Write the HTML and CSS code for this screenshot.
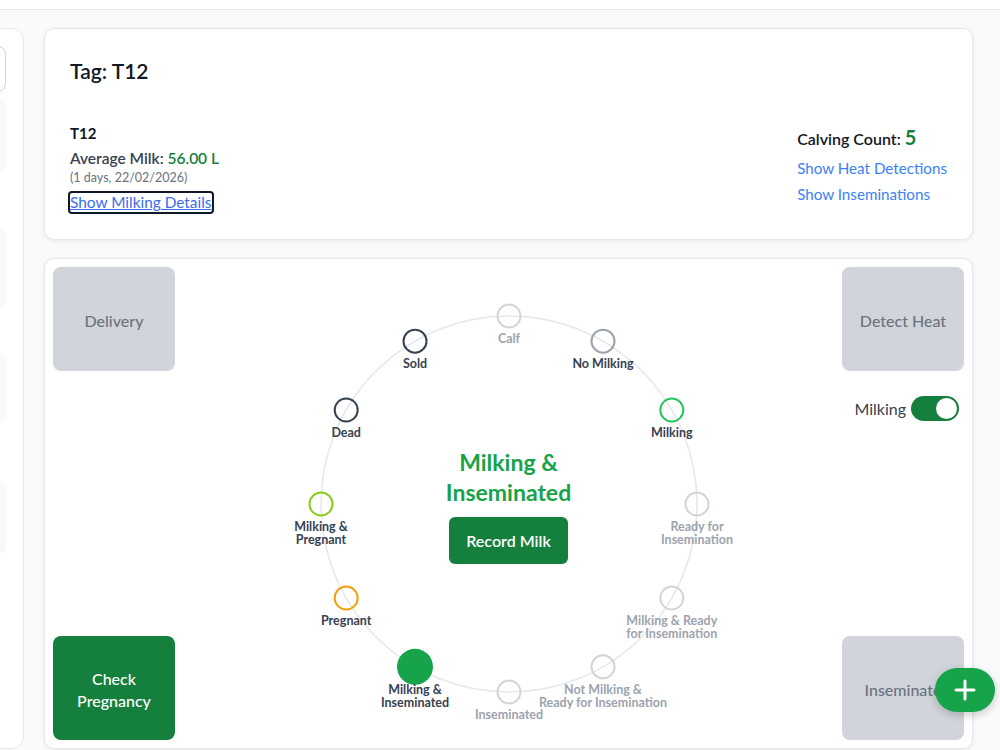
FILE: index.html
```html
<!DOCTYPE html>
<html lang="en">
<head>
<meta charset="utf-8">
<title>Cow T12</title>
<link rel="stylesheet" href="styles.css">
</head>
<body>
<div class="topbar"></div>
<div class="layout">
  <aside class="sidebar">
    <div class="search"></div>
    <div class="side-item item-1"></div>
    <div class="side-item item-2"></div>
    <div class="side-item item-3"></div>
    <div class="side-item item-4"></div>
  </aside>
  <main class="main">
    <section class="card info">
      <h1 class="info-title">Tag: T12</h1>
      <div class="info-body">
        <div class="info-left">
          <div class="tag-name">T12</div>
          <div class="avg">Average Milk: <span class="green">56.00 L</span></div>
          <div class="date">(1 days, 22/02/2026)</div>
          <a class="details-link" href="#">Show Milking Details</a>
        </div>
        <div class="info-right">
          <div class="calving">Calving Count: <span class="count">5</span></div>
          <a class="side-link" href="#">Show Heat Detections</a>
          <a class="side-link" href="#">Show Inseminations</a>
        </div>
      </div>
    </section>
    <section class="card status">
      <div class="col col-left">
        <button class="action gray">Delivery</button>
        <button class="action green-btn bottom">Check<br>Pregnancy</button>
      </div>
      <div class="diagram">
        <svg class="ring" width="440" height="472" viewBox="0 0 440 472">
          <circle cx="220" cy="236" r="188" fill="none" stroke="#e5e7eb" stroke-width="1.5"/>
          <g class="node">
            <circle cx="220" cy="48" r="11.5" fill="none" stroke="#d1d5db" stroke-width="2"/>
            <text class="lbl light" x="220" y="74.5">Calf</text>
          </g>
          <g class="node">
            <circle cx="314" cy="73.2" r="11.5" fill="none" stroke="#9ca3af" stroke-width="2"/>
            <text class="lbl dark" x="314" y="99.7">No Milking</text>
          </g>
          <g class="node">
            <circle cx="382.8" cy="142" r="11.5" fill="none" stroke="#22c55e" stroke-width="2"/>
            <text class="lbl dark" x="382.8" y="168.5">Milking</text>
          </g>
          <g class="node">
            <circle cx="408" cy="236" r="11.5" fill="none" stroke="#d1d5db" stroke-width="2"/>
            <text class="lbl light" x="408" y="263"><tspan x="408">Ready for</tspan><tspan x="408" dy="13">Insemination</tspan></text>
          </g>
          <g class="node">
            <circle cx="382.8" cy="330" r="11.5" fill="none" stroke="#d1d5db" stroke-width="2"/>
            <text class="lbl light" x="382.8" y="357"><tspan x="382.8">Milking &amp; Ready</tspan><tspan x="382.8" dy="13">for Insemination</tspan></text>
          </g>
          <g class="node">
            <circle cx="314" cy="398.8" r="11.5" fill="none" stroke="#d1d5db" stroke-width="2"/>
            <text class="lbl light" x="314" y="425.8"><tspan x="314">Not Milking &amp;</tspan><tspan x="314" dy="13">Ready for Insemination</tspan></text>
          </g>
          <g class="node">
            <circle cx="220" cy="424" r="11.5" fill="none" stroke="#d1d5db" stroke-width="2"/>
            <text class="lbl light" x="220" y="451">Inseminated</text>
          </g>
          <g class="node">
            <circle cx="126" cy="398.8" r="18" fill="#16a34a"/>
            <text class="lbl dark" x="126" y="425.8"><tspan x="126">Milking &amp;</tspan><tspan x="126" dy="13">Inseminated</tspan></text>
          </g>
          <g class="node">
            <circle cx="57.2" cy="330" r="11.5" fill="none" stroke="#f59e0b" stroke-width="2"/>
            <text class="lbl dark" x="57.2" y="357">Pregnant</text>
          </g>
          <g class="node">
            <circle cx="32" cy="236" r="11.5" fill="none" stroke="#84cc16" stroke-width="2"/>
            <text class="lbl dark" x="32" y="263"><tspan x="32">Milking &amp;</tspan><tspan x="32" dy="13">Pregnant</tspan></text>
          </g>
          <g class="node">
            <circle cx="57.2" cy="142" r="11.5" fill="none" stroke="#374151" stroke-width="2"/>
            <text class="lbl dark" x="57.2" y="168.5">Dead</text>
          </g>
          <g class="node">
            <circle cx="126" cy="73.2" r="11.5" fill="none" stroke="#374151" stroke-width="2"/>
            <text class="lbl dark" x="126" y="99.7">Sold</text>
          </g>
        </svg>
        <div class="center">
          <div class="state-title">Milking &amp;<br>Inseminated</div>
          <button class="record">Record Milk</button>
        </div>
      </div>
      <div class="col col-right">
        <button class="action gray">Detect Heat</button>
        <div class="toggle-row">
          <span class="toggle-label">Milking</span>
          <span class="toggle"><span class="knob"></span></span>
        </div>
        <button class="action gray bottom">Inseminate</button>
      </div>
    </section>
  </main>
</div>
<button class="fab" aria-label="Add">
  <svg width="22" height="22" viewBox="0 0 22 22"><path d="M11 2v18M2 11h18" stroke="#fff" stroke-width="3" stroke-linecap="round"/></svg>
</button>
</body>
</html>
```

FILE: styles.css
```css
* { box-sizing: border-box; }
html, body { margin: 0; padding: 0; }
body {
  background: #f9fafb;
  font-family: Lato, "Liberation Sans", sans-serif;
  color: #111827;
  height: 750px;
  overflow: hidden;
}
.topbar {
  height: 10px;
  background: #fff;
  border-bottom: 1px solid #e5e7eb;
}
.layout {
  display: flex;
  gap: 20px;
  padding-top: 18px;
  padding-right: 27px;
}
.sidebar {
  width: 300px;
  margin-left: -276px;
  flex: none;
  height: 721px;
  background: #fff;
  border: 1px solid #e5e7eb;
  border-radius: 12px;
  padding: 17px 17px 0 20px;
}
.search {
  height: 46px;
  border: 1px solid #d1d5db;
  border-radius: 8px;
}
.side-item {
  background: #f8f9fb;
  border-radius: 6px;
}
.item-1 { margin-top: 7px; height: 72px; }
.item-2 { margin-top: 57px; height: 80px; }
.item-3 { margin-top: 45px; height: 70px; }
.item-4 { margin-top: 58px; height: 72px; }

.main {
  flex: 1;
  display: flex;
  flex-direction: column;
  gap: 18px;
}
.card {
  background: #fff;
  border: 1px solid #e5e7eb;
  border-radius: 10px;
  box-shadow: 0 1px 4px rgba(0,0,0,0.08);
}
.info {
  height: 212px;
  padding: 27px 25px 0 25px;
}
.info-title {
  margin: 0;
  font-size: 21px;
  line-height: 30px;
  font-weight: 600;
  color: #111827;
}
.info-body {
  margin-top: 35px;
  display: flex;
  justify-content: space-between;
  align-items: flex-start;
}
.info-left { display: flex; flex-direction: column; align-items: flex-start; }
.tag-name { font-size: 15px; font-weight: 700; line-height: 24px; color: #111827; }
.avg { font-size: 15.5px; font-weight: 600; line-height: 26px; color: #374151; }
.green { color: #15803d; }
.date { font-size: 12.5px; line-height: 14px; color: #6b7280; }
.details-link {
  margin-top: 8px;
  display: inline-block;
  font-size: 15.4px;
  line-height: 19px;
  color: #3b6cf0;
  text-decoration: underline;
  outline: 2px solid #111827;
  border-radius: 2px;
}
.info-right {
  display: flex;
  flex-direction: column;
  align-items: flex-start;
  padding-top: 2px;
  margin-right: 0;
}
.calving { font-size: 16px; font-weight: 600; line-height: 28px; color: #111827; white-space: nowrap; margin-bottom: 2px; }
.count { font-size: 20px; font-weight: 700; color: #15803d; }
.side-link {
  font-size: 15.2px;
  line-height: 26px;
  color: #3b82f6;
  text-decoration: none;
  white-space: nowrap;
}

.status {
  height: 491px;
  padding: 8px;
  display: grid;
  grid-template-columns: 122px 1fr 122px;
}
.col { display: flex; flex-direction: column; }
.action {
  width: 122px;
  height: 104px;
  border: none;
  border-radius: 8px;
  font-family: inherit;
  font-size: 16px;
  font-weight: 500;
  line-height: 22px;
  padding: 3px 0 0 0;
  flex: none;
}
.gray { background: #d1d5db; color: #6b7280; }
.green-btn { background: #15803d; color: #fff; }
.bottom { margin-top: auto; }
.toggle-row {
  margin-top: 25px;
  display: flex;
  justify-content: flex-end;
  align-items: center;
  gap: 5px;
  padding-right: 5px;
}
.toggle-label { font-size: 16px; color: #374151; }
.toggle {
  width: 48px;
  height: 25px;
  border-radius: 13px;
  background: #15803d;
  display: flex;
  justify-content: flex-end;
  align-items: center;
  padding-right: 2px;
}
.knob {
  width: 21px;
  height: 21px;
  border-radius: 50%;
  background: #fff;
}
.diagram {
  display: grid;
}
.ring, .center {
  grid-area: 1 / 1;
  justify-self: center;
  align-self: center;
}
.ring { overflow: visible; }
.lbl {
  font-family: Lato, "Liberation Sans", sans-serif;
  font-size: 12.5px;
  font-weight: 700;
  text-anchor: middle;
}
.dark { fill: #374151; }
.light { fill: #9ca3af; }
.center {
  display: flex;
  flex-direction: column;
  align-items: center;
  margin-top: 4px;
}
.state-title {
  font-size: 23px;
  font-weight: 700;
  line-height: 30px;
  color: #16a34a;
  text-align: center;
}
.record {
  margin-top: 10px;
  height: 47px;
  padding: 0 17px;
  border: none;
  border-radius: 6px;
  background: #15803d;
  color: #fff;
  font-family: inherit;
  font-size: 16px;
  font-weight: 600;
}
.fab {
  position: fixed;
  right: 5px;
  bottom: 38px;
  width: 60px;
  height: 44px;
  border: none;
  border-radius: 22px;
  background: #16a34a;
  box-shadow: 0 3px 8px rgba(0,0,0,0.2);
  display: flex;
  align-items: center;
  justify-content: center;
  padding: 0;
}
```
